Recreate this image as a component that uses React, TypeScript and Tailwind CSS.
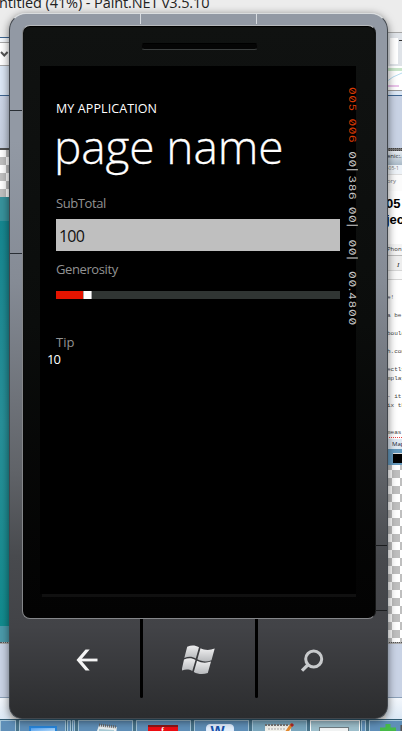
import React from "react";

const checker =
  "bg-[repeating-conic-gradient(#bfbfbf_0_25%,#ffffff_0_50%)] bg-[length:16px_16px]";

function LeftDesktop() {
  return (
    <div className="flex h-full w-[10px] flex-col overflow-hidden">
      <div className="h-[37px] bg-[#ececec]" />
      <div className="h-[5px] border-t border-[#3d6591] bg-[#f4f7fb]" />
      <div className="flex h-[24px] items-center border-y border-[#a9a9a9] bg-white">
        <svg width="9" height="8" viewBox="0 0 9 8" fill="none" stroke="#555" strokeWidth="2">
          <path d="M1 2 4.3 5.5 7.6 2" />
        </svg>
      </div>
      <div className="h-[29px] bg-[#dbe7f5]" />
      <div className="h-[53px] border-t border-[#3d6591] bg-gradient-to-b from-[#cbd5e6] to-[#c5cede]" />
      <div className="h-[2px] bg-[#505050]" />
      <div className={`h-[47px] bg-[position:-2px_-1px] ${checker}`} />
      <div className="h-[24px] bg-[#38929c]" />
      <div className="h-[405px] bg-gradient-to-b from-[#158790] via-[#289099] to-[#118b8e]" />
      <div className="h-[16px] bg-[#4b9aaa]" />
      <div className="h-[2px] border-t border-dotted border-[#555] bg-[#aaa]" />
      <div className="h-[53px] bg-[#c9d3e5]" />
      <div className="grow border-t border-[#8ba0b8] bg-gradient-to-b from-[#f3f7fc] to-[#dce8f5]" />
    </div>
  );
}

function Snippet({ children, className }: { children: React.ReactNode; className: string }) {
  return <div className={`overflow-hidden whitespace-nowrap ${className}`}>{children}</div>;
}

function RightDesktop() {
  return (
    <div className="flex h-full w-[16px] flex-col overflow-hidden">
      <div className="h-[32px] bg-[#ececec]" />
      <div className="flex h-[34px] border-t border-[#a6a6a6] bg-[#dfe3e8] pl-[4px] pt-[5px]">
        <div className="h-[26px] w-[9px] bg-white" />
        <div className="ml-px mt-[2px] h-px w-[3px] bg-[#333]" />
      </div>
      <div className="h-[24px] bg-white pt-[2px]">
        <div className="h-[3px] bg-[#c8e5c9]" />
        <svg width="16" height="17" fill="none">
          <path d="M0 11 7 6l9-4" stroke="#b5dcf0" />
          <path d="M1 15h12" stroke="#eac4ea" strokeWidth="2" />
        </svg>
      </div>
      <div className="h-[5px] border-t border-[#999] bg-[#dbe7f5]" />
      <div className="h-[53px] border-t border-[#3d6591] bg-[#c8d2e4]" />
      <div className="h-[3px] border-y border-dotted border-[#444] bg-[#777]" />
      <div className="h-[14px] bg-gradient-to-b from-[#e9eef3] to-[#a9bac8]">
        <Snippet className="pl-px font-['Open_Sans',sans-serif] text-[6px] leading-[10px] text-[#222]">enic:.</Snippet>
      </div>
      <div className="h-[9px] bg-[#eef3f8]">
        <Snippet className="pl-px font-['Open_Sans',sans-serif] text-[5px] leading-[7px] text-[#777]">-05-1</Snippet>
      </div>
      <div className="h-[17px] border-t border-[#ddd] bg-[#fbfbfb]">
        <Snippet className="pl-px font-['Open_Sans',sans-serif] text-[6px] leading-[12px] text-[#777]">ory</Snippet>
      </div>
      <div className="h-[53px] bg-white pt-[5px] font-['Liberation_Sans',sans-serif] text-[13px] font-bold leading-[16px] text-black">
        <Snippet className="">05</Snippet>
        <Snippet className="">ject</Snippet>
      </div>
      <div className="h-[11px] bg-[#f5f5f5]">
        <Snippet className="pl-px font-['Open_Sans',sans-serif] text-[6px] leading-[10px] text-[#333]">Phon</Snippet>
      </div>
      <div className="h-[15px] border-t border-[#bbb] bg-[#eeeeee]">
        <Snippet className="pl-[11px] font-['Liberation_Serif',serif] text-[7px] italic leading-[18px] text-[#222]">I</Snippet>
      </div>
      <div className="h-[10px] border-y border-[#d5d5d5] bg-[#fafafa]" />
      <div className="h-[159px] bg-white pt-[13px] font-['Liberation_Mono',monospace] text-[6px] leading-[9px] text-[#444]">
        <Snippet className="pl-px">e!</Snippet>
        <Snippet className="mt-[9px] pl-px">a be</Snippet>
        <Snippet className="mt-[9px] pl-px">bould</Snippet>
        <Snippet className="mt-[9px] pl-px">h.com</Snippet>
        <Snippet className="mt-[9px] pl-px">ectly</Snippet>
        <Snippet className="pl-px">mplay</Snippet>
        <Snippet className="mt-[9px] pl-px">- it</Snippet>
        <Snippet className="pl-px">ix th</Snippet>
        <Snippet className="mt-[18px] border-b border-dotted border-[#e44] pl-px">meas</Snippet>
      </div>
      <div className="h-[10px] bg-[#dfe9f3] font-['Open_Sans',sans-serif] text-[6px] leading-[10px] text-[#223]">
        <Snippet className="pl-[6px]">Map</Snippet>
      </div>
      <div className="flex h-[16px] bg-[#659abe] pl-[7px] pt-[4px]">
        <div className="h-[10px] w-[9px] border-t border-[#ddd] bg-black" />
      </div>
      <div className={`h-[177px] bg-[position:-2px_5px] ${checker}`} />
      <div className="h-[2px] border-t border-dotted border-[#555] bg-[#aaa]" />
      <div className="h-[53px] bg-[#c9d3e5]" />
      <div className="grow border-t border-[#8ba0b8] bg-gradient-to-b from-[#f3f7fc] to-[#dce8f5]" />
    </div>
  );
}

function Taskbar() {
  const cell = "h-full shrink-0 overflow-hidden border-x border-t border-[#a4c5d8] bg-[#5f8fb8]";
  return (
    <div className="flex h-[12px] gap-[3px] overflow-hidden border-t border-[#315b72] bg-[#48748b]">
      <div className={`${cell} w-[16px]`} />
      <div className={`${cell} flex w-[47px] justify-center pt-[5px]`}>
        <div className="h-[7px] w-[28px] border-2 border-b-0 border-[#2784d8] bg-gradient-to-br from-[#4e9fee] to-[#cce8fa]" />
      </div>
      <div className={`${cell} -ml-[2px] w-[4px]`} />
      <div className={`${cell} -ml-[2px] w-[3px]`} />
      <div className={`${cell} w-[55px]`}>
        <svg width="54" height="12">
          <path d="m20 4 18 2-1 7H17z" fill="#e8eff1" />
          <path d="m20 4 18 2" stroke="#666" strokeWidth="3" strokeDasharray="1 1" />
          <path d="m20 9 15 1" stroke="#a6c9d4" strokeWidth="2" />
        </svg>
      </div>
      <div className={`${cell} flex w-[55px] justify-center pr-[2px] pt-[4px]`}>
        <div className="h-[8px] w-[30px] border-t-2 border-[#8b1717] bg-[#ee0c12] text-center font-['Liberation_Serif',serif] text-[8px] font-bold leading-[7px] text-white">f</div>
      </div>
      <div className={`${cell} flex w-[55px] justify-center pr-[4px] pt-[3px]`}>
        <div className="h-[9px] w-[28px] rounded-t-sm border border-[#dceaff] bg-[#e3f0fe] pl-[4px] text-left font-['Liberation_Sans',sans-serif] text-[15px] font-bold leading-[12px] text-[#1852ac]">W</div>
      </div>
      <div className={`${cell} w-[55px] bg-[#79a6bd]`}>
        <svg width="54" height="12">
          <path d="M12 4h26v9H12z" fill="#f2f2ec" />
          <path d="M12 4h24" stroke="#777" strokeWidth="2" strokeDasharray="2 1" />
          <path d="M15 8h17" stroke="#aaa" strokeDasharray="2 1" />
          <path d="m33 12 6-9" stroke="#e38a31" strokeWidth="3" />
          <path d="m38 5 2-2" stroke="#b02626" strokeWidth="3" />
        </svg>
      </div>
      <div className={`${cell} flex w-[50px] justify-center border-white bg-[#9dbfcc] pr-[2px] pt-[6px]`}>
        <div className="h-[6px] w-[30px] border border-[#707c82] bg-[#f2f4f4]" />
      </div>
      <div className={`${cell} -ml-[2px] w-[5px]`} />
      <div className={`${cell} w-[50px] bg-[#4d918f]`}>
        <svg width="48" height="12">
          <path d="M18 3v9M10 9h16" stroke="#46ba48" strokeWidth="5" />
          <path d="M32 4v8" stroke="#555" strokeWidth="3" />
        </svg>
      </div>
    </div>
  );
}

function Counters() {
  return (
    <div className="absolute -right-px top-[21px] flex w-[9px] origin-top scale-y-[1.26] flex-col whitespace-nowrap font-['Inter',sans-serif] text-[9.5px] leading-[9px] tracking-[0.4px] text-[#c4c4c4] [font-feature-settings:'zero','tnum']">
      <span className="h-[25.4px] text-[#d63a05] [writing-mode:vertical-rl]">005</span>
      <span className="h-[25.4px] text-[#d63a05] [writing-mode:vertical-rl]">006</span>
      <span className="h-[44.4px] [writing-mode:vertical-rl]">
        00<span className="tracking-[3px]">|</span>386
      </span>
      <span className="h-[25.4px] [writing-mode:vertical-rl]">00|</span>
      <span className="h-[25.4px] [writing-mode:vertical-rl]">00|</span>
      <span className="h-[50px] tracking-[0.6px] [writing-mode:vertical-rl]">00.4800</span>
    </div>
  );
}

function AppScreen() {
  return (
    <div className="relative h-[528px] w-[316px] bg-black font-['Open_Sans','Noto_Sans',sans-serif]">
      <Counters />
      <div className="flex flex-col pl-[16px] pr-[16px] pt-[34px]">
        <div className="h-[18px] whitespace-nowrap text-[12.5px] leading-[18px] tracking-[0.1px] text-white">MY APPLICATION</div>
        <h1 className="-ml-[2px] h-[56px] whitespace-nowrap text-[46px] font-light leading-[56px] tracking-[-0.1px] text-white [-webkit-text-stroke:0.3px_white]">page name</h1>
        <label className="mt-[20px] h-[18px] text-[13px] leading-[18px] tracking-[-0.4px] text-[#929292]">SubTotal</label>
        <div className="mt-[7px] flex h-[32px] items-center bg-[#bfbfbf] pl-[3px] text-[16px] leading-none tracking-[-0.8px] text-[#111]">
          <span className="mt-[2px]">100</span>
        </div>
        <label className="mt-[9px] h-[18px] text-[13px] leading-[18px] tracking-[-0.4px] text-[#929292]">Generosity</label>
        <div className="mt-[13px] flex h-[8px] bg-[#303533]">
          <div className="w-[27px] bg-[#e51400]" />
          <div className="w-[9px] border-x border-[#aaa] bg-white" />
        </div>
        <label className="mt-[34px] h-[18px] text-[13px] leading-[18px] text-[#929292]">Tip</label>
        <div className="-ml-[9px] -mt-px text-[13px] leading-[18px] tracking-[-0.9px] text-white">10</div>
      </div>
    </div>
  );
}

function HardwareKeys() {
  return (
    <div className="flex h-[80px] w-[354px]">
      <div className="flex w-[118px] justify-center pl-[11px] pt-[30px]">
        <svg width="22" height="22" viewBox="0 0 22 22" fill="none" stroke="#f4f4f4">
          <path d="M21.5 11H3" strokeWidth="2.8" />
          <path d="M9.5.5h4.2L4.8 11l8.9 10.5H9.5L0.5 11z" fill="#f4f4f4" stroke="none" />
        </svg>
      </div>
      <div className="h-[79px] w-[3px] rounded-b bg-black" />
      <div className="flex w-[112px] justify-center pt-[25px]">
        <svg width="34" height="32" viewBox="0 0 34 32">
          <defs>
            <linearGradient id="flag" x2="0" y2="1">
              <stop stopColor="#eeeeef" />
              <stop offset="1" stopColor="#b7b9bc" />
            </linearGradient>
          </defs>
          <g fill="url(#flag)">
            <path d="M5.2 2.8C9.5.8 13 1 17 3.3L13.8 14.5C10 12.3 6.5 12.2 2.3 14z" />
            <path d="M18.5 4.3c4.3 2.2 9.2 2.3 14.2.3l-3.2 11.6c-4.8 1.9-9.6 1.5-14.1-.9z" />
            <path d="M2 15.5c4.2-1.9 8-1.7 11.5.4L10.3 27C6.7 25 3.6 25.1-.5 26.7z" />
            <path d="M15 16.8c4.2 2.2 9.2 2.6 14 .8L25.8 29c-5 1.8-10 1.2-14-1.1z" />
          </g>
        </svg>
      </div>
      <div className="h-[79px] w-[3px] rounded-b bg-black" />
      <div className="flex w-[118px] justify-center pr-[10px] pt-[30px]">
        <svg width="24" height="24" viewBox="0 0 24 24" fill="none" stroke="#c8cacc">
          <circle cx="13.7" cy="10" r="8" strokeWidth="3" />
          <path d="m8 15.8-6 5.8" strokeWidth="3.3" />
        </svg>
      </div>
    </div>
  );
}

function Phone() {
  return (
    <div className="absolute left-[9px] top-[13px] h-[706px] w-[379px] rounded-[17px] rounded-b-[13px] border border-[#41464c] border-t-[#dadddf] bg-[linear-gradient(to_bottom,#9299a4_0%,#9299a4_18%,#858b95_38%,#606368_65%,#484a4e_77%,#424347_87%,#2b2c2e_100%)] pl-[12px] shadow-[0_2px_8px_rgba(0,0,0,.55)]">
      <div className="flex h-[11px] justify-between pl-[118px] pr-[130px]">
        <div className="h-[10px] w-px bg-[#d7dbe0]" />
        <div className="h-[10px] w-px bg-[#d7dbe0]" />
      </div>
      <div className="flex h-[594px] w-[354px] flex-col items-center rounded-[8px] border border-[#85878a] border-r-[#171818] border-t-[#b7babd] bg-gradient-to-b from-[#101211] via-[#0b0d0c] to-[#030303] shadow-[inset_0_1px_1px_#000]">
        <div className="mt-[17px] h-[7px] w-[117px] rounded-full border border-b-[#3c3f3f] border-t-black border-x-[#111] bg-[#050505]" />
        <div className="ml-[17px] mt-[16px] self-start">
          <AppScreen />
          <div className="ml-[2px] h-[3px] w-[314px] bg-[#101010]" />
        </div>
      </div>
      <HardwareKeys />
      <div className="absolute left-0 top-[96px] h-px w-[12px] bg-[#292e34]" />
      <div className="absolute left-0 top-[239px] h-px w-[12px] bg-[#292e34]" />
      <div className="absolute right-0 top-[531px] h-px w-[12px] bg-[#1b1d1f]" />
      <div className="absolute right-0 top-[596px] h-px w-[12px] bg-[#1b1d1f]" />
    </div>
  );
}

export default function App() {
  return (
    <main className="relative flex h-[731px] w-[402px] flex-col overflow-hidden bg-[#ececec]">
      <div className="flex h-[719px] justify-between">
        <LeftDesktop />
        <div className="w-[376px] whitespace-nowrap font-['Open_Sans',sans-serif] text-[14.5px] leading-[20px] tracking-[-0.1px] text-[#222]">
          <div className="-ml-[11px] -mt-[7px]">ntitled (41%) - Paint.NET v3.5.10</div>
        </div>
        <RightDesktop />
      </div>
      <Taskbar />
      <Phone />
    </main>
  );
}
